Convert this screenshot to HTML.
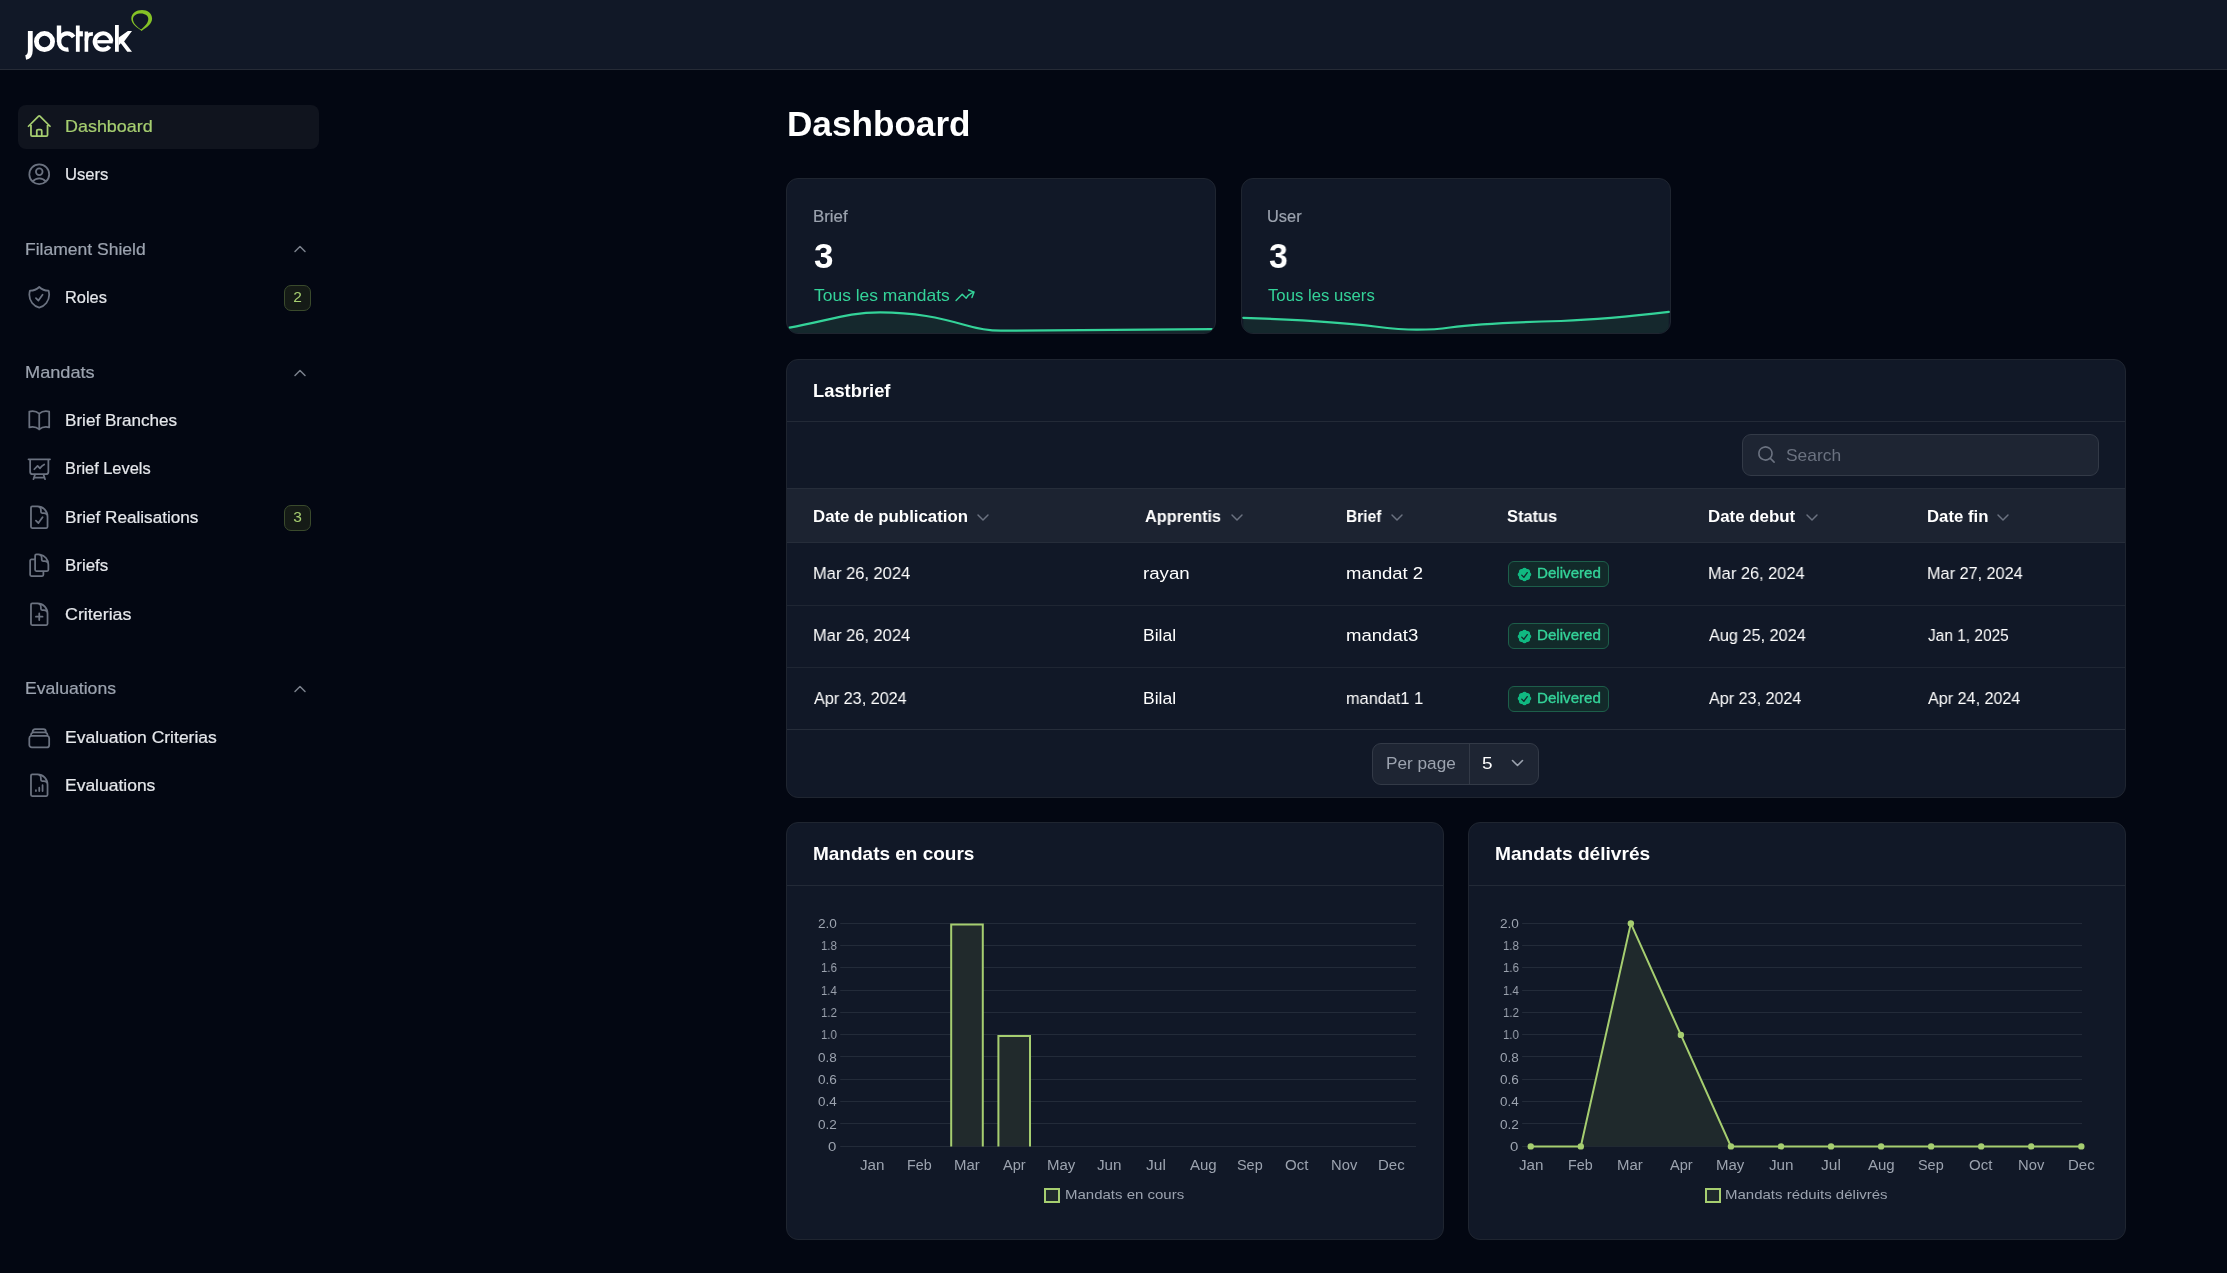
<!DOCTYPE html>
<html><head><meta charset="utf-8"><title>Dashboard</title>
<style>
html,body{margin:0;padding:0;}
body{width:2227px;height:1273px;overflow:hidden;background:#030712;position:relative;font-family:"Liberation Sans", sans-serif;}
.t{position:absolute;line-height:1;white-space:nowrap;font-family:"Liberation Sans", sans-serif;will-change:transform;}
.card{position:absolute;box-sizing:border-box;background:#111827;border:1px solid #1f2530;border-radius:12px;}
svg{overflow:visible}
</style></head><body>
<div style="position:absolute;left:0;top:0;width:2227px;height:69px;background:#111827;border-bottom:1px solid #262b36"></div>
<svg style="position:absolute;left:0;top:0" width="160" height="70" viewBox="0 0 160 70">
<g fill="none" stroke="#fff" stroke-linecap="butt">
<path d="M30.3 31.1V50.5C30.3 55.2 28.6 57 25.7 57.5" stroke-width="4.8"/>
<circle cx="44.5" cy="41.55" r="8.1" stroke-width="4.8"/>
<path d="M59 25.5V42" stroke-width="4.4"/>
<path d="M73.69 36.93A8.05 8.05 0 1 0 68.5 49.48" stroke-width="4.4"/>
<path d="M77.8 25.5V51.8" stroke-width="3.8"/>
<path d="M77.8 33.8H82.9" stroke-width="5.2"/>
<path d="M86.4 51.8V31.5" stroke-width="3.6"/>
<path d="M86.4 40.5C86.4 35.5 88.5 33.8 92.9 33.8" stroke-width="3.7"/>
<path d="M111.2 41.55A8.2 8.2 0 1 0 109.5 46.5" stroke-width="4.2"/>
<path d="M97.1 41.75H112.7" stroke-width="3.3"/>
<path d="M116.9 25V51.8" stroke-width="3.8"/>
</g>
<path fill="#fff" d="M118.8 37.6L127.9 31H132L124.1 41.4L132 51.8H127.3L120.8 43.2L118.8 45.2Z"/>
<path fill="#85c226" fill-rule="evenodd" d="M141.6 30.9C137 27.5 131.3 24 131.3 18.8C131.3 13 136.5 9.9 142 9.9C147.5 9.9 152.1 13 152.1 18.8C152.1 24 146.5 27.5 141.6 30.9ZM141.0 29.6C137.5 26.8 133.0 23.5 133.0 19.2C133.0 15.5 136.8 13.5 140.8 13.5C145.2 13.5 148.3 15.8 148.3 19C148.3 23.2 144.3 26.8 141.0 29.6Z"/>
</svg>
<div style="position:absolute;left:18px;top:105px;width:301px;height:44px;border-radius:8px;background:#10141e"></div>
<svg style="position:absolute;left:26.15px;top:112.55px" width="26.5" height="26.5" viewBox="0 0 24 24" fill="none" stroke="#a6ce70" stroke-width="1.6" stroke-linecap="round" stroke-linejoin="round"><path d="M2.25 12l8.954-8.955c.44-.439 1.152-.439 1.591 0L21.75 12M4.5 9.75v10.125c0 .621.504 1.125 1.125 1.125H9.75v-4.875c0-.621.504-1.125 1.125-1.125h2.25c.621 0 1.125.504 1.125 1.125V21h4.125c.621 0 1.125-.504 1.125-1.125V9.75M8.25 21h8.25"/></svg>
<div class="t" style="left:65.05px;top:118.32px;font-size:16.4px;font-weight:400;color:#a6ce70;transform:scaleX(1.0937);transform-origin:0 0;-webkit-text-stroke:0.2px #a6ce70">Dashboard</div>
<svg style="position:absolute;left:26.15px;top:161.35px" width="26.5" height="26.5" viewBox="0 0 24 24" fill="none" stroke="#6b7280" stroke-width="1.6" stroke-linecap="round" stroke-linejoin="round"><path d="M17.982 18.725A7.488 7.488 0 0 0 12 15.75a7.488 7.488 0 0 0-5.982 2.975m11.963 0a9 9 0 1 0-11.963 0m11.963 0A8.966 8.966 0 0 1 12 21a8.966 8.966 0 0 1-5.982-2.275M15 9.75a3 3 0 1 1-6 0 3 3 0 0 1 6 0Z"/></svg>
<div class="t" style="left:65.21px;top:166.22px;font-size:16.4px;font-weight:400;color:#e5e7eb;transform:scaleX(1.0146);transform-origin:0 0;-webkit-text-stroke:0.2px #e5e7eb">Users</div>
<div class="t" style="left:25.27px;top:241.19px;font-size:16.2px;font-weight:400;color:#9ca3af;transform:scaleX(1.0823);transform-origin:0 0;-webkit-text-stroke:0.2px #9ca3af">Filament Shield</div>
<svg style="position:absolute;left:290px;top:239.3px" width="20" height="20" viewBox="0 0 20 20" fill="none" stroke="#7a808c" stroke-width="1.5" stroke-linecap="round" stroke-linejoin="round"><path d="M5 12.5 10 7.5l5 5"/></svg>
<svg style="position:absolute;left:26.15px;top:284.45px" width="26.5" height="26.5" viewBox="0 0 24 24" fill="none" stroke="#6b7280" stroke-width="1.6" stroke-linecap="round" stroke-linejoin="round"><path d="M9 12.75 11.25 15 15 9.75m-3-7.036A11.959 11.959 0 0 1 3.598 6 11.99 11.99 0 0 0 3 9.749c0 5.592 3.824 10.29 9 11.623 5.176-1.332 9-6.03 9-11.622 0-1.31-.21-2.571-.598-3.751h-.152c-3.196 0-6.1-1.248-8.25-3.285Z"/></svg>
<div class="t" style="left:65.18px;top:289.32px;font-size:16.4px;font-weight:400;color:#e5e7eb;transform:scaleX(0.9900);transform-origin:0 0;-webkit-text-stroke:0.2px #e5e7eb">Roles</div>
<div style="position:absolute;box-sizing:border-box;left:284px;top:285.0px;width:27px;height:26px;border:1px solid #3a4a2c;background:#151b16;border-radius:7px"></div>
<div class="t" style="left:284px;width:27px;text-align:center;top:289.1px;font-size:15.5px;color:#a6ce70">2</div>
<div class="t" style="left:25.22px;top:364.49px;font-size:16.2px;font-weight:400;color:#9ca3af;transform:scaleX(1.1227);transform-origin:0 0;-webkit-text-stroke:0.2px #9ca3af">Mandats</div>
<svg style="position:absolute;left:290px;top:362.6px" width="20" height="20" viewBox="0 0 20 20" fill="none" stroke="#7a808c" stroke-width="1.5" stroke-linecap="round" stroke-linejoin="round"><path d="M5 12.5 10 7.5l5 5"/></svg>
<svg style="position:absolute;left:26.15px;top:407.25px" width="26.5" height="26.5" viewBox="0 0 24 24" fill="none" stroke="#6b7280" stroke-width="1.6" stroke-linecap="round" stroke-linejoin="round"><path d="M12 6.042A8.967 8.967 0 0 0 6 3.75c-1.052 0-2.062.18-3 .512v14.25A8.987 8.987 0 0 1 6 18c2.305 0 4.408.867 6 2.292m0-14.25a8.966 8.966 0 0 1 6-2.292c1.052 0 2.062.18 3 .512v14.25A8.987 8.987 0 0 0 18 18a8.967 8.967 0 0 0-6 2.292m0-14.25v14.25"/></svg>
<div class="t" style="left:65.11px;top:412.12px;font-size:16.4px;font-weight:400;color:#e5e7eb;transform:scaleX(1.0427);transform-origin:0 0;-webkit-text-stroke:0.2px #e5e7eb">Brief Branches</div>
<svg style="position:absolute;left:26.15px;top:455.85px" width="26.5" height="26.5" viewBox="0 0 24 24" fill="none" stroke="#6b7280" stroke-width="1.6" stroke-linecap="round" stroke-linejoin="round"><path d="M3.75 3v11.25A2.25 2.25 0 0 0 6 16.5h2.25M3.75 3h-1.5m1.5 0h16.5m0 0h1.5m-1.5 0v11.25A2.25 2.25 0 0 1 18 16.5h-2.25m-7.5 0h7.5m-7.5 0-1 3m8.5-3 1 3m0 0 .5 1.5m-.5-1.5h-9.5m0 0-.5 1.5m.75-9 3-3 2.148 2.148A12.061 12.061 0 0 1 16.5 7.605"/></svg>
<div class="t" style="left:65.17px;top:460.32px;font-size:16.4px;font-weight:400;color:#e5e7eb;transform:scaleX(0.9988);transform-origin:0 0;-webkit-text-stroke:0.2px #e5e7eb">Brief Levels</div>
<svg style="position:absolute;left:26.15px;top:504.45px" width="26.5" height="26.5" viewBox="0 0 24 24" fill="none" stroke="#6b7280" stroke-width="1.6" stroke-linecap="round" stroke-linejoin="round"><path d="M10.125 2.25h-4.5c-.621 0-1.125.504-1.125 1.125v17.25c0 .621.504 1.125 1.125 1.125h12.75c.621 0 1.125-.504 1.125-1.125v-9M10.125 2.25h.375a9 9 0 0 1 9 9v.375M10.125 2.25A3.375 3.375 0 0 1 13.5 5.625v1.5c0 .621.504 1.125 1.125 1.125h1.5a3.375 3.375 0 0 1 3.375 3.375M9 15l2.25 2.25L15 12"/></svg>
<div class="t" style="left:65.11px;top:509.32px;font-size:16.4px;font-weight:400;color:#e5e7eb;transform:scaleX(1.0462);transform-origin:0 0;-webkit-text-stroke:0.2px #e5e7eb">Brief Realisations</div>
<div style="position:absolute;box-sizing:border-box;left:284px;top:505.0px;width:27px;height:26px;border:1px solid #3a4a2c;background:#151b16;border-radius:7px"></div>
<div class="t" style="left:284px;width:27px;text-align:center;top:509.1px;font-size:15.5px;color:#a6ce70">3</div>
<svg style="position:absolute;left:26.15px;top:552.35px" width="26.5" height="26.5" viewBox="0 0 24 24" fill="none" stroke="#6b7280" stroke-width="1.6" stroke-linecap="round" stroke-linejoin="round"><path d="M15.75 17.25v3.375c0 .621-.504 1.125-1.125 1.125h-9.750a1.125 1.125 0 0 1-1.125-1.125V7.875c0-.621.504-1.125 1.125-1.125H6.75a9.06 9.06 0 0 1 1.5.124m7.5 10.376h3.375c.621 0 1.125-.504 1.125-1.125V11.25c0-4.46-3.243-8.161-7.5-8.876a9.06 9.06 0 0 0-1.5-.124H9.375c-.621 0-1.125.504-1.125 1.125v3.5m7.5 10.375H9.375a1.125 1.125 0 0 1-1.125-1.125v-9.25m12 6.625v-1.875a3.375 3.375 0 0 0-3.375-3.375h-1.5a1.125 1.125 0 0 1-1.125-1.125v-1.5a3.375 3.375 0 0 0-3.375-3.375H9.75"/></svg>
<div class="t" style="left:65.13px;top:557.22px;font-size:16.4px;font-weight:400;color:#e5e7eb;transform:scaleX(1.0299);transform-origin:0 0;-webkit-text-stroke:0.2px #e5e7eb">Briefs</div>
<svg style="position:absolute;left:26.15px;top:600.95px" width="26.5" height="26.5" viewBox="0 0 24 24" fill="none" stroke="#6b7280" stroke-width="1.6" stroke-linecap="round" stroke-linejoin="round"><path d="M19.5 14.25v-2.625a3.375 3.375 0 0 0-3.375-3.375h-1.5A1.125 1.125 0 0 1 13.5 7.125v-1.5a3.375 3.375 0 0 0-3.375-3.375H8.25m3.75 9v6m3-3H9m1.5-12H5.625c-.621 0-1.125.504-1.125 1.125v17.250c0 .621.504 1.125 1.125 1.125h12.75c.621 0 1.125-.504 1.125-1.125V11.25a9 9 0 0 0-9-9Z"/></svg>
<div class="t" style="left:65.36px;top:606.22px;font-size:16.4px;font-weight:400;color:#e5e7eb;transform:scaleX(1.0892);transform-origin:0 0;-webkit-text-stroke:0.2px #e5e7eb">Criterias</div>
<div class="t" style="left:25.27px;top:679.89px;font-size:16.2px;font-weight:400;color:#9ca3af;transform:scaleX(1.0870);transform-origin:0 0;-webkit-text-stroke:0.2px #9ca3af">Evaluations</div>
<svg style="position:absolute;left:290px;top:678.7px" width="20" height="20" viewBox="0 0 20 20" fill="none" stroke="#7a808c" stroke-width="1.5" stroke-linecap="round" stroke-linejoin="round"><path d="M5 12.5 10 7.5l5 5"/></svg>
<svg style="position:absolute;left:26.15px;top:725.15px" width="26.5" height="26.5" viewBox="0 0 24 24" fill="none" stroke="#6b7280" stroke-width="1.6" stroke-linecap="round" stroke-linejoin="round"><path d="M6 6.878V6a2.25 2.25 0 0 1 2.25-2.25h7.5A2.25 2.25 0 0 1 18 6v.878m-12 0c.235-.083.487-.128.75-.128h10.5c.263 0 .515.045.75.128m-12 0A2.25 2.25 0 0 0 4.5 9v.878m13.5-3A2.25 2.25 0 0 1 19.5 9v.878m0 0a2.246 2.246 0 0 0-.75-.128H5.25c-.263 0-.515.045-.75.128m15 0A2.25 2.25 0 0 1 21 12v6a2.25 2.25 0 0 1-2.25 2.25H5.25A2.25 2.25 0 0 1 3 18v-6c0-.98.626-1.813 1.5-2.122"/></svg>
<div class="t" style="left:65.08px;top:728.92px;font-size:16.4px;font-weight:400;color:#e5e7eb;transform:scaleX(1.0684);transform-origin:0 0;-webkit-text-stroke:0.2px #e5e7eb">Evaluation Criterias</div>
<svg style="position:absolute;left:26.15px;top:772.45px" width="26.5" height="26.5" viewBox="0 0 24 24" fill="none" stroke="#6b7280" stroke-width="1.6" stroke-linecap="round" stroke-linejoin="round"><path d="M19.5 14.25v-2.625a3.375 3.375 0 0 0-3.375-3.375h-1.5A1.125 1.125 0 0 1 13.5 7.125v-1.5a3.375 3.375 0 0 0-3.375-3.375H8.25M9 16.5v.75m3-3v3M15 12v5.25m-4.5-15H5.625c-.621 0-1.125.504-1.125 1.125v17.25c0 .621.504 1.125 1.125 1.125h12.75c.621 0 1.125-.504 1.125-1.125V11.25a9 9 0 0 0-9-9Z"/></svg>
<div class="t" style="left:65.08px;top:777.32px;font-size:16.4px;font-weight:400;color:#e5e7eb;transform:scaleX(1.0663);transform-origin:0 0;-webkit-text-stroke:0.2px #e5e7eb">Evaluations</div>
<div class="t" style="left:786.66px;top:106.27px;font-size:35px;font-weight:700;color:#fff;transform:scaleX(1.0039);transform-origin:0 0;">Dashboard</div>
<div class="card" style="left:786px;top:178px;width:430px;height:156px;overflow:hidden"><svg style="position:absolute;left:-787px;top:-179px" width="2227" height="400" viewBox="0 0 2227 400"><path d="M789.5 327.7 C830 320 850 312.3 880 312.3 C915 312.3 940 318 965 325 C980 329.5 990 330.7 1001 330.7 L1211.8 329.1 L1211.8 334 L789.5 334 Z" fill="#15282d"/><path d="M789.5 327.7 C830 320 850 312.3 880 312.3 C915 312.3 940 318 965 325 C980 329.5 990 330.7 1001 330.7 L1211.8 329.1" fill="none" stroke="#34d399" stroke-width="2.2" stroke-linecap="round"/></svg></div>
<div class="card" style="left:1241px;top:178px;width:430px;height:156px;overflow:hidden"><svg style="position:absolute;left:-1242px;top:-179px" width="2227" height="400" viewBox="0 0 2227 400"><path d="M1243.3 317.8 C1290 319.5 1340 322 1375 326.5 C1395 329 1405 329.7 1417 329.7 C1430 329.7 1440 329 1450 327.5 C1480 323.5 1520 322 1561 321 C1600 319.5 1630 316.5 1668.8 311.9 L1668.8 334 L1243.3 334 Z" fill="#15282d"/><path d="M1243.3 317.8 C1290 319.5 1340 322 1375 326.5 C1395 329 1405 329.7 1417 329.7 C1430 329.7 1440 329 1450 327.5 C1480 323.5 1520 322 1561 321 C1600 319.5 1630 316.5 1668.8 311.9" fill="none" stroke="#34d399" stroke-width="2.2" stroke-linecap="round"/></svg></div>
<div class="t" style="left:812.74px;top:208.20px;font-size:16.3px;font-weight:400;color:#9ca3af;transform:scaleX(1.0341);transform-origin:0 0;-webkit-text-stroke:0.2px #9ca3af">Brief</div>
<div class="t" style="left:813.67px;top:238.17px;font-size:35px;font-weight:700;color:#fff;transform:scaleX(0.9769);transform-origin:0 0;">3</div>
<div class="t" style="left:813.72px;top:287.75px;font-size:16.6px;font-weight:400;color:#34d399;transform:scaleX(1.0515);transform-origin:0 0;">Tous les mandats</div>
<svg style="position:absolute;left:953.50px;top:284.20px" width="22" height="22" viewBox="0 0 24 24" fill="none" stroke="#34d399" stroke-width="1.6" stroke-linecap="round" stroke-linejoin="round"><path d="M2.25 18 9 11.25l4.306 4.306a11.95 11.95 0 0 1 5.814-5.518l2.74-1.22m0 0-5.94-2.281m5.94 2.28-2.28 5.941"/></svg>
<div class="t" style="left:1267.34px;top:208.20px;font-size:16.3px;font-weight:400;color:#9ca3af;transform:scaleX(1.0060);transform-origin:0 0;-webkit-text-stroke:0.2px #9ca3af">User</div>
<div class="t" style="left:1268.69px;top:238.17px;font-size:35px;font-weight:700;color:#fff;transform:scaleX(0.9653);transform-origin:0 0;">3</div>
<div class="t" style="left:1268.24px;top:287.75px;font-size:16.6px;font-weight:400;color:#34d399;transform:scaleX(1.0067);transform-origin:0 0;">Tous les users</div>
<div class="card" style="left:786px;top:359px;width:1340px;height:439px;overflow:hidden"></div>
<div class="t" style="left:812.76px;top:381.56px;font-size:18px;font-weight:700;color:#fff;transform:scaleX(1.0187);transform-origin:0 0;">Lastbrief</div>
<div style="position:absolute;left:787px;top:421px;width:1338px;height:1px;background:#232a37"></div>
<div style="position:absolute;left:1742px;top:434px;width:357px;height:42px;box-sizing:border-box;border:1px solid #333a47;border-radius:9px;background:#1e2533"></div>
<svg style="position:absolute;left:1756px;top:444px" width="21" height="21" viewBox="0 0 20 20" fill="#6b7280"><path fill-rule="evenodd" d="M9 3.5a5.5 5.5 0 1 0 0 11 5.5 5.5 0 0 0 0-11ZM2 9a7 7 0 1 1 12.452 4.391l3.328 3.329a.75.75 0 1 1-1.06 1.06l-3.329-3.328A7 7 0 0 1 2 9Z"/></svg>
<div class="t" style="left:1786.44px;top:447.95px;font-size:16.6px;font-weight:400;color:#6b7280;transform:scaleX(1.0475);transform-origin:0 0;">Search</div>
<div style="position:absolute;left:787px;top:488px;width:1338px;height:53px;background:#1c2331;border-top:1px solid #262d3a;border-bottom:1px solid #262d3a"></div>
<div class="t" style="left:812.83px;top:509.06px;font-size:16.7px;font-weight:700;color:#fff;transform:scaleX(1.0066);transform-origin:0 0;">Date de publication</div>
<svg style="position:absolute;left:976px;top:512.5px" width="14" height="9" viewBox="0 0 14 9" fill="none" stroke="#6b7280" stroke-width="1.45" stroke-linecap="round" stroke-linejoin="round"><path d="M2 2 7 7 12 2"/></svg>
<div class="t" style="left:1144.74px;top:509.06px;font-size:16.7px;font-weight:700;color:#fff;transform:scaleX(0.9765);transform-origin:0 0;">Apprentis</div>
<svg style="position:absolute;left:1229.5px;top:512.5px" width="14" height="9" viewBox="0 0 14 9" fill="none" stroke="#6b7280" stroke-width="1.45" stroke-linecap="round" stroke-linejoin="round"><path d="M2 2 7 7 12 2"/></svg>
<div class="t" style="left:1345.92px;top:509.06px;font-size:16.7px;font-weight:700;color:#fff;transform:scaleX(0.9299);transform-origin:0 0;">Brief</div>
<svg style="position:absolute;left:1390px;top:512.5px" width="14" height="9" viewBox="0 0 14 9" fill="none" stroke="#6b7280" stroke-width="1.45" stroke-linecap="round" stroke-linejoin="round"><path d="M2 2 7 7 12 2"/></svg>
<div class="t" style="left:1507.44px;top:509.06px;font-size:16.7px;font-weight:700;color:#fff;transform:scaleX(0.9839);transform-origin:0 0;">Status</div>
<div class="t" style="left:1707.73px;top:509.06px;font-size:16.7px;font-weight:700;color:#fff;transform:scaleX(1.0106);transform-origin:0 0;">Date debut</div>
<svg style="position:absolute;left:1804.5px;top:512.5px" width="14" height="9" viewBox="0 0 14 9" fill="none" stroke="#6b7280" stroke-width="1.45" stroke-linecap="round" stroke-linejoin="round"><path d="M2 2 7 7 12 2"/></svg>
<div class="t" style="left:1926.74px;top:509.06px;font-size:16.7px;font-weight:700;color:#fff;transform:scaleX(1.0034);transform-origin:0 0;">Date fin</div>
<svg style="position:absolute;left:1996px;top:512.5px" width="14" height="9" viewBox="0 0 14 9" fill="none" stroke="#6b7280" stroke-width="1.45" stroke-linecap="round" stroke-linejoin="round"><path d="M2 2 7 7 12 2"/></svg>
<div class="t" style="left:812.67px;top:564.54px;font-size:17.2px;font-weight:400;color:#fff;transform:scaleX(0.9598);transform-origin:0 0;">Mar 26, 2024</div>
<div class="t" style="left:1143.40px;top:564.54px;font-size:17.2px;font-weight:400;color:#fff;transform:scaleX(1.0860);transform-origin:0 0;">rayan</div>
<div class="t" style="left:1345.71px;top:564.54px;font-size:17.2px;font-weight:400;color:#fff;transform:scaleX(1.0761);transform-origin:0 0;">mandat 2</div>
<div class="t" style="left:1707.67px;top:564.54px;font-size:17.2px;font-weight:400;color:#fff;transform:scaleX(0.9538);transform-origin:0 0;">Mar 26, 2024</div>
<div class="t" style="left:1926.59px;top:564.54px;font-size:17.2px;font-weight:400;color:#fff;transform:scaleX(0.9447);transform-origin:0 0;">Mar 27, 2024</div>
<div style="position:absolute;left:1508px;top:561.0px;width:101px;height:26px;box-sizing:border-box;border:1px solid #1d5e4a;border-radius:6px;background:#122a2a"></div>
<svg style="position:absolute;left:1516.00px;top:565.50px" width="17" height="17" viewBox="0 0 20 20" fill="#10b981"><path fill-rule="evenodd" clip-rule="evenodd" d="M16.403 12.652a3 3 0 0 0 0-5.304 3 3 0 0 0-3.75-3.751 3 3 0 0 0-5.305 0 3 3 0 0 0-3.751 3.75 3 3 0 0 0 0 5.305 3 3 0 0 0 3.75 3.751 3 3 0 0 0 5.305 0 3 3 0 0 0 3.751-3.75Zm-2.546-4.46a.75.75 0 0 0-1.214-.883l-3.483 4.79-1.88-1.88a.75.75 0 1 0-1.06 1.061l2.5 2.5a.75.75 0 0 0 1.137-.089l4-5.5Z"/></svg>
<div class="t" style="left:1537.03px;top:565.74px;font-size:14.6px;font-weight:400;color:#34d399;transform:scaleX(1.0370);transform-origin:0 0;-webkit-text-stroke:0.35px #34d399">Delivered</div>
<div style="position:absolute;left:787px;top:605px;width:1338px;height:1px;background:#1f2633"></div>
<div class="t" style="left:812.67px;top:627.24px;font-size:17.2px;font-weight:400;color:#fff;transform:scaleX(0.9598);transform-origin:0 0;">Mar 26, 2024</div>
<div class="t" style="left:1142.99px;top:627.24px;font-size:17.2px;font-weight:400;color:#fff;transform:scaleX(1.0166);transform-origin:0 0;">Bilal</div>
<div class="t" style="left:1345.90px;top:627.24px;font-size:17.2px;font-weight:400;color:#fff;transform:scaleX(1.0802);transform-origin:0 0;">mandat3</div>
<div class="t" style="left:1708.96px;top:627.24px;font-size:17.2px;font-weight:400;color:#fff;transform:scaleX(0.9459);transform-origin:0 0;">Aug 25, 2024</div>
<div class="t" style="left:1927.83px;top:627.24px;font-size:17.2px;font-weight:400;color:#fff;transform:scaleX(0.8988);transform-origin:0 0;">Jan 1, 2025</div>
<div style="position:absolute;left:1508px;top:623.4px;width:101px;height:26px;box-sizing:border-box;border:1px solid #1d5e4a;border-radius:6px;background:#122a2a"></div>
<svg style="position:absolute;left:1516.00px;top:627.90px" width="17" height="17" viewBox="0 0 20 20" fill="#10b981"><path fill-rule="evenodd" clip-rule="evenodd" d="M16.403 12.652a3 3 0 0 0 0-5.304 3 3 0 0 0-3.75-3.751 3 3 0 0 0-5.305 0 3 3 0 0 0-3.751 3.75 3 3 0 0 0 0 5.305 3 3 0 0 0 3.75 3.751 3 3 0 0 0 5.305 0 3 3 0 0 0 3.751-3.75Zm-2.546-4.46a.75.75 0 0 0-1.214-.883l-3.483 4.79-1.88-1.88a.75.75 0 1 0-1.06 1.061l2.5 2.5a.75.75 0 0 0 1.137-.089l4-5.5Z"/></svg>
<div class="t" style="left:1537.03px;top:628.14px;font-size:14.6px;font-weight:400;color:#34d399;transform:scaleX(1.0370);transform-origin:0 0;-webkit-text-stroke:0.35px #34d399">Delivered</div>
<div style="position:absolute;left:787px;top:667px;width:1338px;height:1px;background:#1f2633"></div>
<div class="t" style="left:813.76px;top:690.44px;font-size:17.2px;font-weight:400;color:#fff;transform:scaleX(0.9416);transform-origin:0 0;">Apr 23, 2024</div>
<div class="t" style="left:1142.99px;top:690.44px;font-size:17.2px;font-weight:400;color:#fff;transform:scaleX(1.0166);transform-origin:0 0;">Bilal</div>
<div class="t" style="left:1346.06px;top:690.44px;font-size:17.2px;font-weight:400;color:#fff;transform:scaleX(0.9496);transform-origin:0 0;">mandat1 1</div>
<div class="t" style="left:1708.97px;top:690.44px;font-size:17.2px;font-weight:400;color:#fff;transform:scaleX(0.9385);transform-origin:0 0;">Apr 23, 2024</div>
<div class="t" style="left:1927.97px;top:690.44px;font-size:17.2px;font-weight:400;color:#fff;transform:scaleX(0.9385);transform-origin:0 0;">Apr 24, 2024</div>
<div style="position:absolute;left:1508px;top:685.8px;width:101px;height:26px;box-sizing:border-box;border:1px solid #1d5e4a;border-radius:6px;background:#122a2a"></div>
<svg style="position:absolute;left:1516.00px;top:690.30px" width="17" height="17" viewBox="0 0 20 20" fill="#10b981"><path fill-rule="evenodd" clip-rule="evenodd" d="M16.403 12.652a3 3 0 0 0 0-5.304 3 3 0 0 0-3.75-3.751 3 3 0 0 0-5.305 0 3 3 0 0 0-3.751 3.75 3 3 0 0 0 0 5.305 3 3 0 0 0 3.75 3.751 3 3 0 0 0 5.305 0 3 3 0 0 0 3.751-3.75Zm-2.546-4.46a.75.75 0 0 0-1.214-.883l-3.483 4.79-1.88-1.88a.75.75 0 1 0-1.06 1.061l2.5 2.5a.75.75 0 0 0 1.137-.089l4-5.5Z"/></svg>
<div class="t" style="left:1537.03px;top:690.54px;font-size:14.6px;font-weight:400;color:#34d399;transform:scaleX(1.0370);transform-origin:0 0;-webkit-text-stroke:0.35px #34d399">Delivered</div>
<div style="position:absolute;left:787px;top:729px;width:1338px;height:1px;background:#262d3a"></div>
<div style="position:absolute;left:1372px;top:743px;width:167px;height:42px;box-sizing:border-box;border:1px solid #333a47;border-radius:9px;background:#1e2533"></div>
<div style="position:absolute;left:1469px;top:744px;width:1px;height:40px;background:#333a47"></div>
<div class="t" style="left:1385.71px;top:755.00px;font-size:16.3px;font-weight:400;color:#9ca3af;transform:scaleX(1.0562);transform-origin:0 0;">Per page</div>
<div class="t" style="left:1482.31px;top:755.00px;font-size:16.3px;font-weight:400;color:#fff;transform:scaleX(1.1622);transform-origin:0 0;">5</div>
<svg style="position:absolute;left:1510px;top:758px" width="15" height="11" viewBox="0 0 15 11" fill="none" stroke="#9ca3af" stroke-width="1.6" stroke-linecap="round" stroke-linejoin="round"><path d="M2.5 2.5 7.5 7.5 12.5 2.5"/></svg>
<div class="card" style="left:786px;top:822px;width:658px;height:418px;overflow:hidden"></div>
<div class="card" style="left:1468px;top:822px;width:658px;height:418px;overflow:hidden"></div>
<div class="t" style="left:813.09px;top:846.02px;font-size:17.7px;font-weight:700;color:#fff;transform:scaleX(1.0734);transform-origin:0 0;">Mandats en cours</div>
<div class="t" style="left:1494.98px;top:845.82px;font-size:17.7px;font-weight:700;color:#fff;transform:scaleX(1.0812);transform-origin:0 0;">Mandats délivrés</div>
<div style="position:absolute;left:787px;top:885px;width:656px;height:1px;background:#232a37"></div>
<div style="position:absolute;left:1469px;top:885px;width:656px;height:1px;background:#232a37"></div>
<svg style="position:absolute;left:0;top:0" width="2227" height="1273" viewBox="0 0 2227 1273"><line x1="840.2" y1="1146.50" x2="1416" y2="1146.50" stroke="#232b39" stroke-width="1"/><line x1="840.2" y1="1123.50" x2="1416" y2="1123.50" stroke="#232b39" stroke-width="1"/><line x1="840.2" y1="1101.50" x2="1416" y2="1101.50" stroke="#232b39" stroke-width="1"/><line x1="840.2" y1="1079.50" x2="1416" y2="1079.50" stroke="#232b39" stroke-width="1"/><line x1="840.2" y1="1056.50" x2="1416" y2="1056.50" stroke="#232b39" stroke-width="1"/><line x1="840.2" y1="1034.50" x2="1416" y2="1034.50" stroke="#232b39" stroke-width="1"/><line x1="840.2" y1="1012.50" x2="1416" y2="1012.50" stroke="#232b39" stroke-width="1"/><line x1="840.2" y1="990.50" x2="1416" y2="990.50" stroke="#232b39" stroke-width="1"/><line x1="840.2" y1="967.50" x2="1416" y2="967.50" stroke="#232b39" stroke-width="1"/><line x1="840.2" y1="945.50" x2="1416" y2="945.50" stroke="#232b39" stroke-width="1"/><line x1="840.2" y1="923.50" x2="1416" y2="923.50" stroke="#232b39" stroke-width="1"/><rect x="951.19" y="924.40" width="31.60" height="222.00" fill="#212a2c"/><path d="M951.19 1146.40 V924.40 H982.79 V1146.40" fill="none" stroke="#a6ce70" stroke-width="2"/><rect x="998.41" y="1035.90" width="31.60" height="110.50" fill="#212a2c"/><path d="M998.41 1146.40 V1035.90 H1030.01 V1146.40" fill="none" stroke="#a6ce70" stroke-width="2"/></svg>
<div class="t" style="left:828.23px;top:1141.14px;font-size:12.3px;font-weight:400;color:#9ca3af;transform:scaleX(1.2167);transform-origin:0 0;">0</div>
<div class="t" style="left:817.78px;top:1118.54px;font-size:12.3px;font-weight:400;color:#9ca3af;transform:scaleX(1.1056);transform-origin:0 0;">0.2</div>
<div class="t" style="left:817.79px;top:1095.74px;font-size:12.3px;font-weight:400;color:#9ca3af;transform:scaleX(1.0920);transform-origin:0 0;">0.4</div>
<div class="t" style="left:817.78px;top:1074.24px;font-size:12.3px;font-weight:400;color:#9ca3af;transform:scaleX(1.1056);transform-origin:0 0;">0.6</div>
<div class="t" style="left:817.78px;top:1051.64px;font-size:12.3px;font-weight:400;color:#9ca3af;transform:scaleX(1.0988);transform-origin:0 0;">0.8</div>
<div class="t" style="left:820.61px;top:1028.84px;font-size:12.3px;font-weight:400;color:#9ca3af;transform:scaleX(0.9295);transform-origin:0 0;">1.0</div>
<div class="t" style="left:820.60px;top:1006.54px;font-size:12.3px;font-weight:400;color:#9ca3af;transform:scaleX(0.9355);transform-origin:0 0;">1.2</div>
<div class="t" style="left:820.61px;top:984.84px;font-size:12.3px;font-weight:400;color:#9ca3af;transform:scaleX(0.9236);transform-origin:0 0;">1.4</div>
<div class="t" style="left:820.60px;top:962.34px;font-size:12.3px;font-weight:400;color:#9ca3af;transform:scaleX(0.9355);transform-origin:0 0;">1.6</div>
<div class="t" style="left:820.61px;top:939.64px;font-size:12.3px;font-weight:400;color:#9ca3af;transform:scaleX(0.9295);transform-origin:0 0;">1.8</div>
<div class="t" style="left:817.64px;top:918.14px;font-size:12.3px;font-weight:400;color:#9ca3af;transform:scaleX(1.1056);transform-origin:0 0;">2.0</div>
<div class="t" style="left:860.49px;top:1158.25px;font-size:14.0px;font-weight:400;color:#9ca3af;transform:scaleX(1.0845);transform-origin:0 0;">Jan</div>
<div class="t" style="left:907.11px;top:1158.25px;font-size:14.0px;font-weight:400;color:#9ca3af;transform:scaleX(1.0223);transform-origin:0 0;">Feb</div>
<div class="t" style="left:953.63px;top:1158.25px;font-size:14.0px;font-weight:400;color:#9ca3af;transform:scaleX(1.0661);transform-origin:0 0;">Mar</div>
<div class="t" style="left:1002.89px;top:1158.25px;font-size:14.0px;font-weight:400;color:#9ca3af;transform:scaleX(1.0376);transform-origin:0 0;">Apr</div>
<div class="t" style="left:1046.62px;top:1158.25px;font-size:14.0px;font-weight:400;color:#9ca3af;transform:scaleX(1.0711);transform-origin:0 0;">May</div>
<div class="t" style="left:1096.54px;top:1158.25px;font-size:14.0px;font-weight:400;color:#9ca3af;transform:scaleX(1.0892);transform-origin:0 0;">Jun</div>
<div class="t" style="left:1146.25px;top:1158.25px;font-size:14.0px;font-weight:400;color:#9ca3af;transform:scaleX(1.1098);transform-origin:0 0;">Jul</div>
<div class="t" style="left:1190.16px;top:1158.25px;font-size:14.0px;font-weight:400;color:#9ca3af;transform:scaleX(1.0720);transform-origin:0 0;">Aug</div>
<div class="t" style="left:1237.14px;top:1158.25px;font-size:14.0px;font-weight:400;color:#9ca3af;transform:scaleX(1.0302);transform-origin:0 0;">Sep</div>
<div class="t" style="left:1285.44px;top:1158.25px;font-size:14.0px;font-weight:400;color:#9ca3af;transform:scaleX(1.0755);transform-origin:0 0;">Oct</div>
<div class="t" style="left:1331.05px;top:1158.25px;font-size:14.0px;font-weight:400;color:#9ca3af;transform:scaleX(1.0551);transform-origin:0 0;">Nov</div>
<div class="t" style="left:1378.20px;top:1158.25px;font-size:14.0px;font-weight:400;color:#9ca3af;transform:scaleX(1.0730);transform-origin:0 0;">Dec</div>
<svg style="position:absolute;left:0;top:0" width="2227" height="1273" viewBox="0 0 2227 1273"><line x1="1522.1" y1="1146.50" x2="2082" y2="1146.50" stroke="#232b39" stroke-width="1"/><line x1="1522.1" y1="1123.50" x2="2082" y2="1123.50" stroke="#232b39" stroke-width="1"/><line x1="1522.1" y1="1101.50" x2="2082" y2="1101.50" stroke="#232b39" stroke-width="1"/><line x1="1522.1" y1="1079.50" x2="2082" y2="1079.50" stroke="#232b39" stroke-width="1"/><line x1="1522.1" y1="1056.50" x2="2082" y2="1056.50" stroke="#232b39" stroke-width="1"/><line x1="1522.1" y1="1034.50" x2="2082" y2="1034.50" stroke="#232b39" stroke-width="1"/><line x1="1522.1" y1="1012.50" x2="2082" y2="1012.50" stroke="#232b39" stroke-width="1"/><line x1="1522.1" y1="990.50" x2="2082" y2="990.50" stroke="#232b39" stroke-width="1"/><line x1="1522.1" y1="967.50" x2="2082" y2="967.50" stroke="#232b39" stroke-width="1"/><line x1="1522.1" y1="945.50" x2="2082" y2="945.50" stroke="#232b39" stroke-width="1"/><line x1="1522.1" y1="923.50" x2="2082" y2="923.50" stroke="#232b39" stroke-width="1"/><polygon points="1530.75,1146.4 1530.75,1146.40 1580.80,1146.40 1630.85,923.40 1680.90,1034.90 1730.95,1146.40 1781.00,1146.40 1831.05,1146.40 1881.10,1146.40 1931.15,1146.40 1981.20,1146.40 2031.25,1146.40 2081.30,1146.40 2081.30,1146.4" fill="#1f292c"/><polyline points="1530.75,1146.40 1580.80,1146.40 1630.85,923.40 1680.90,1034.90 1730.95,1146.40 1781.00,1146.40 1831.05,1146.40 1881.10,1146.40 1931.15,1146.40 1981.20,1146.40 2031.25,1146.40 2081.30,1146.40" fill="none" stroke="#a6ce70" stroke-width="2"/><circle cx="1530.75" cy="1146.40" r="3.2" fill="#a6ce70"/><circle cx="1580.80" cy="1146.40" r="3.2" fill="#a6ce70"/><circle cx="1630.85" cy="923.40" r="3.2" fill="#a6ce70"/><circle cx="1680.90" cy="1034.90" r="3.2" fill="#a6ce70"/><circle cx="1730.95" cy="1146.40" r="3.2" fill="#a6ce70"/><circle cx="1781.00" cy="1146.40" r="3.2" fill="#a6ce70"/><circle cx="1831.05" cy="1146.40" r="3.2" fill="#a6ce70"/><circle cx="1881.10" cy="1146.40" r="3.2" fill="#a6ce70"/><circle cx="1931.15" cy="1146.40" r="3.2" fill="#a6ce70"/><circle cx="1981.20" cy="1146.40" r="3.2" fill="#a6ce70"/><circle cx="2031.25" cy="1146.40" r="3.2" fill="#a6ce70"/><circle cx="2081.30" cy="1146.40" r="3.2" fill="#a6ce70"/></svg>
<div class="t" style="left:1510.23px;top:1141.14px;font-size:12.3px;font-weight:400;color:#9ca3af;transform:scaleX(1.2167);transform-origin:0 0;">0</div>
<div class="t" style="left:1499.78px;top:1118.54px;font-size:12.3px;font-weight:400;color:#9ca3af;transform:scaleX(1.1056);transform-origin:0 0;">0.2</div>
<div class="t" style="left:1499.79px;top:1095.74px;font-size:12.3px;font-weight:400;color:#9ca3af;transform:scaleX(1.0920);transform-origin:0 0;">0.4</div>
<div class="t" style="left:1499.78px;top:1074.24px;font-size:12.3px;font-weight:400;color:#9ca3af;transform:scaleX(1.1056);transform-origin:0 0;">0.6</div>
<div class="t" style="left:1499.78px;top:1051.64px;font-size:12.3px;font-weight:400;color:#9ca3af;transform:scaleX(1.0988);transform-origin:0 0;">0.8</div>
<div class="t" style="left:1502.61px;top:1028.84px;font-size:12.3px;font-weight:400;color:#9ca3af;transform:scaleX(0.9295);transform-origin:0 0;">1.0</div>
<div class="t" style="left:1502.60px;top:1006.54px;font-size:12.3px;font-weight:400;color:#9ca3af;transform:scaleX(0.9355);transform-origin:0 0;">1.2</div>
<div class="t" style="left:1502.61px;top:984.84px;font-size:12.3px;font-weight:400;color:#9ca3af;transform:scaleX(0.9236);transform-origin:0 0;">1.4</div>
<div class="t" style="left:1502.60px;top:962.34px;font-size:12.3px;font-weight:400;color:#9ca3af;transform:scaleX(0.9355);transform-origin:0 0;">1.6</div>
<div class="t" style="left:1502.61px;top:939.64px;font-size:12.3px;font-weight:400;color:#9ca3af;transform:scaleX(0.9295);transform-origin:0 0;">1.8</div>
<div class="t" style="left:1499.64px;top:918.14px;font-size:12.3px;font-weight:400;color:#9ca3af;transform:scaleX(1.1056);transform-origin:0 0;">2.0</div>
<div class="t" style="left:1518.69px;top:1158.25px;font-size:14.0px;font-weight:400;color:#9ca3af;transform:scaleX(1.0845);transform-origin:0 0;">Jan</div>
<div class="t" style="left:1568.14px;top:1158.25px;font-size:14.0px;font-weight:400;color:#9ca3af;transform:scaleX(1.0223);transform-origin:0 0;">Feb</div>
<div class="t" style="left:1617.49px;top:1158.25px;font-size:14.0px;font-weight:400;color:#9ca3af;transform:scaleX(1.0661);transform-origin:0 0;">Mar</div>
<div class="t" style="left:1669.58px;top:1158.25px;font-size:14.0px;font-weight:400;color:#9ca3af;transform:scaleX(1.0376);transform-origin:0 0;">Apr</div>
<div class="t" style="left:1716.14px;top:1158.25px;font-size:14.0px;font-weight:400;color:#9ca3af;transform:scaleX(1.0711);transform-origin:0 0;">May</div>
<div class="t" style="left:1768.89px;top:1158.25px;font-size:14.0px;font-weight:400;color:#9ca3af;transform:scaleX(1.0892);transform-origin:0 0;">Jun</div>
<div class="t" style="left:1821.43px;top:1158.25px;font-size:14.0px;font-weight:400;color:#9ca3af;transform:scaleX(1.1098);transform-origin:0 0;">Jul</div>
<div class="t" style="left:1868.17px;top:1158.25px;font-size:14.0px;font-weight:400;color:#9ca3af;transform:scaleX(1.0720);transform-origin:0 0;">Aug</div>
<div class="t" style="left:1917.98px;top:1158.25px;font-size:14.0px;font-weight:400;color:#9ca3af;transform:scaleX(1.0302);transform-origin:0 0;">Sep</div>
<div class="t" style="left:1969.11px;top:1158.25px;font-size:14.0px;font-weight:400;color:#9ca3af;transform:scaleX(1.0755);transform-origin:0 0;">Oct</div>
<div class="t" style="left:2017.55px;top:1158.25px;font-size:14.0px;font-weight:400;color:#9ca3af;transform:scaleX(1.0551);transform-origin:0 0;">Nov</div>
<div class="t" style="left:2067.53px;top:1158.25px;font-size:14.0px;font-weight:400;color:#9ca3af;transform:scaleX(1.0730);transform-origin:0 0;">Dec</div>
<div style="position:absolute;left:1044.3px;top:1187.8px;width:15.8px;height:15.2px;box-sizing:border-box;border:2px solid #a6ce70;background:#1f292c"></div>
<div class="t" style="left:1064.59px;top:1188.96px;font-size:12.8px;font-weight:400;color:#9ca3af;transform:scaleX(1.1717);transform-origin:0 0;">Mandats en cours</div>
<div style="position:absolute;left:1705px;top:1187.8px;width:15.8px;height:15.2px;box-sizing:border-box;border:2px solid #a6ce70;background:#1f292c"></div>
<div class="t" style="left:1725.09px;top:1189.36px;font-size:12.8px;font-weight:400;color:#9ca3af;transform:scaleX(1.1720);transform-origin:0 0;">Mandats réduits délivrés</div>
</body></html>
